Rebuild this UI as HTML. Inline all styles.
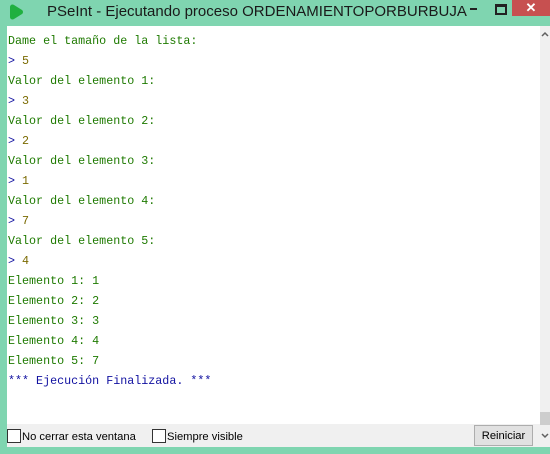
<!DOCTYPE html>
<html><head><meta charset="utf-8"><style>
body{margin:0;width:550px;height:454px;background:#7fd5b0;position:relative;overflow:hidden;font-family:"Liberation Sans",sans-serif}
.title{position:absolute;left:47px;top:3px;font-size:15px;color:#1a1a1a}
.close{position:absolute;left:512px;top:0;width:38px;height:16px;background:#c75050;color:#fff;text-align:center;font-size:13px;line-height:15px;font-weight:bold}
.max{position:absolute;left:495px;top:4px;width:8px;height:6px;border:2px solid #222;border-top-width:3px}
.min{position:absolute;left:470px;top:8px;width:7px;height:2px;background:#222}
.client{position:absolute;left:7px;top:26px;width:543px;height:421px;background:#fff}
.out{position:absolute;left:1px;top:5px;font-family:"Liberation Mono",monospace;font-size:11.7px;line-height:20px;color:#1e7a00;white-space:pre}
.b{color:#1010a0}.n{color:#7a6a00}
.sb{position:absolute;left:533px;top:0;width:10px;height:421px;background:#f0f0f0}
.thumb{position:absolute;left:0;top:386px;width:10px;height:13px;background:#cdcdcd}
.bar{position:absolute;left:0;top:398px;width:533px;height:23px;background:#f0f0f0;font-size:11.2px;color:#000}
.cb{position:absolute;top:5px;width:12px;height:12px;border:1px solid #333;background:#fff}
.lbl{position:absolute;top:7px}
.btn{position:absolute;left:467px;top:1px;width:57px;height:19px;border:1px solid #adadad;background:#e1e1e1;text-align:center;line-height:21px}
</style></head><body>
<svg style="position:absolute;left:9px;top:4px" width="15" height="16" viewBox="0 0 15 16"><path d="M3.5 3 L11.5 8 L3.5 13 Z" fill="#20b040" stroke="#20b040" stroke-width="5" stroke-linejoin="round"/></svg>
<div class="title">PSeInt - Ejecutando proceso ORDENAMIENTOPORBURBUJA</div>
<div class="min"></div><div class="max"></div><div class="close">✕</div>
<div class="client">
<div class="out">Dame el tamaño de la lista:
<span class="b">&gt;</span> <span class="n">5</span>
Valor del elemento 1:
<span class="b">&gt;</span> <span class="n">3</span>
Valor del elemento 2:
<span class="b">&gt;</span> <span class="n">2</span>
Valor del elemento 3:
<span class="b">&gt;</span> <span class="n">1</span>
Valor del elemento 4:
<span class="b">&gt;</span> <span class="n">7</span>
Valor del elemento 5:
<span class="b">&gt;</span> <span class="n">4</span>
Elemento 1: 1
Elemento 2: 2
Elemento 3: 3
Elemento 4: 4
Elemento 5: 7
<span class="b">*** Ejecución Finalizada. ***</span></div>
<div class="sb">
<svg style="position:absolute;left:1px;top:5px" width="8" height="6" viewBox="0 0 8 6"><path d="M1 5 L4 2 L7 5" fill="none" stroke="#606060" stroke-width="1.5"/></svg>
<div class="thumb"></div>
<svg style="position:absolute;left:1px;top:407px" width="8" height="6" viewBox="0 0 8 6"><path d="M1 1 L4 4 L7 1" fill="none" stroke="#606060" stroke-width="1.5"/></svg>
</div>
<div class="bar">
<div class="cb" style="left:0"></div><div class="lbl" style="left:15px">No cerrar esta ventana</div>
<div class="cb" style="left:145px"></div><div class="lbl" style="left:160px">Siempre visible</div>
<div class="btn">Reiniciar</div>
</div>
</div>
</body></html>
